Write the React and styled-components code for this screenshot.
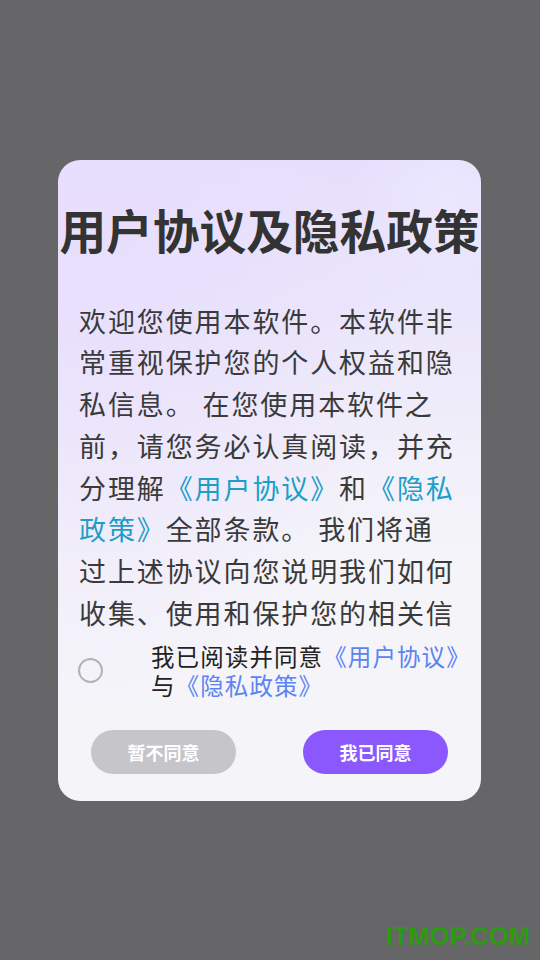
import React from 'react';
import styled, { createGlobalStyle } from 'styled-components';

const GlobalStyle = createGlobalStyle`
  html, body {
    margin: 0;
    padding: 0;
    background: #666668;
  }
  * {
    box-sizing: border-box;
  }
`;

const App = () => (
  <>
    <GlobalStyle />
    <Page>
      <Card>
        <Title>用户协议及隐私政策</Title>
        <Body>
          欢迎您使用本软件。本软件非常重视保护您的个人权益和隐私信息。 在您使用本软件之前，请您务必认真阅读，并充分理解
          <Link>《用户协议》</Link>和<Link>《隐私政策》</Link>
          全部条款。 我们将通过上述协议向您说明我们如何收集、使用和保护您的相关信息，以及您享有的相关权利。
        </Body>
        <AgreeRow>
          <Radio />
          <AgreeText>
            我已阅读并同意<AgreeLink>《用户协议》</AgreeLink>
            <br />与<AgreeLink>《隐私政策》</AgreeLink>
          </AgreeText>
        </AgreeRow>
        <Buttons>
          <Button>暂不同意</Button>
          <Button primary>我已同意</Button>
        </Buttons>
      </Card>
      <Watermark>ITMOP.COM</Watermark>
    </Page>
  </>
);

export default App;

const Page = styled.div`
  position: relative;
  width: 540px;
  height: 960px;
  display: flex;
  justify-content: center;
  align-items: center;
  font-family: "Noto Sans CJK SC", "Noto Sans", sans-serif;
`;

const Card = styled.div`
  width: 423px;
  height: 641px;
  margin-left: -1px;
  border-radius: 22px;
  padding: 41px 0 27px;
  display: flex;
  flex-direction: column;
  overflow: hidden;
  background:
    radial-gradient(circle at 92% 6%, rgba(236, 232, 255, 0.9) 0, rgba(236, 232, 255, 0) 90px),
    radial-gradient(ellipse at 10% 0%, rgba(232, 222, 253, 1) 0, rgba(232, 222, 253, 0) 60%),
    linear-gradient(180deg, #e6e0fc 0%, #ebe7fb 25%, #f2f0f9 48%, #f5f4f9 62%, #f5f4f9 100%);
`;

const Title = styled.h1`
  margin: 0;
  height: 56px;
  line-height: 56px;
  font-size: 46.7px;
  font-weight: 700;
  color: #333333;
  text-align: center;
  white-space: nowrap;
`;

const Body = styled.div`
  margin: 43px 21px 0;
  height: 334px;
  overflow: hidden;
  font-size: 27px;
  letter-spacing: 1.9px;
  line-height: 41.75px;
  color: #3a3a3a;
`;

const Link = styled.span`
  color: #1d9ec9;
`;

const AgreeRow = styled.div`
  margin-top: 8px;
  padding-left: 20px;
  display: flex;
  align-items: center;
  gap: 48px;
`;

const Radio = styled.span`
  flex: none;
  width: 25px;
  height: 25px;
  border-radius: 50%;
  border: 2px solid #b2b2b4;
`;

const AgreeText = styled.div`
  font-size: 23.5px;
  letter-spacing: 1.1px;
  line-height: 29px;
  color: #222222;
  white-space: nowrap;
`;

const AgreeLink = styled.span`
  color: #5b84f3;
`;

const Buttons = styled.div`
  margin-top: auto;
  padding: 0 33px;
  display: flex;
  justify-content: space-between;
`;

const Button = styled.button`
  width: 145px;
  height: 44px;
  border: none;
  border-radius: 22px;
  background: ${({ primary }) => (primary ? '#8a58fc' : '#c6c5ca')};
  color: #ffffff;
  font-family: "Noto Sans CJK SC", sans-serif;
  font-size: 18px;
  font-weight: 700;
  padding: 0;
`;

const Watermark = styled.div`
  position: absolute;
  right: 10px;
  bottom: 9px;
  font-family: "Liberation Sans", Arial, sans-serif;
  font-weight: 700;
  font-size: 25.5px;
  color: #2b9b12;
`;
